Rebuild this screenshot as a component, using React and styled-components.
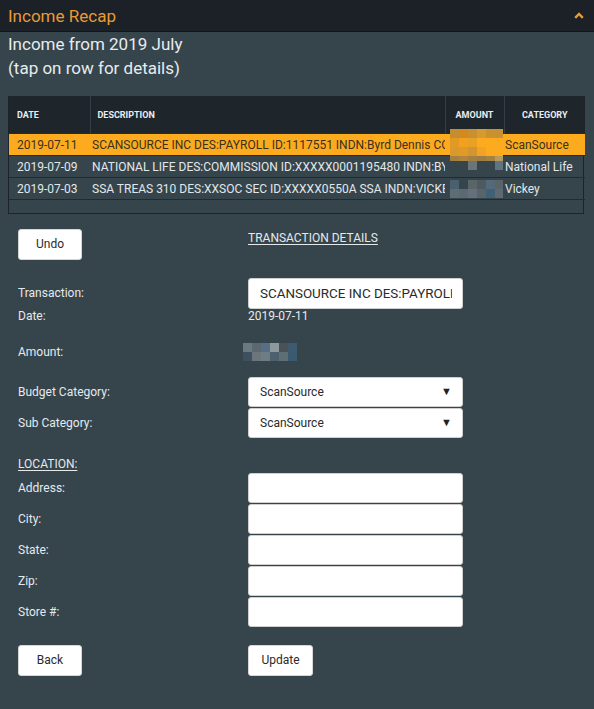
import React from 'react';
import styled, { createGlobalStyle } from 'styled-components';

const GlobalStyle = createGlobalStyle`
  html, body {
    margin: 0;
    padding: 0;
    background: #36444c;
  }
  body {
    font-family: Roboto, "Liberation Sans", Arial, sans-serif;
    color: #e4eaec;
  }
`;

const Page = styled.div`
  width: 594px;
  min-height: 709px;
  background: #36444c;
`;

const TitleBar = styled.div`
  height: 31px;
  background: #1b2127;
  border-bottom: 1px solid #11161a;
  display: flex;
  align-items: center;
  justify-content: space-between;
  padding: 0 10px 0 8px;
`;

const Title = styled.div`
  color: #e99a35;
  font-size: 17px;
`;

const Intro = styled.div`
  padding: 0 8px;
  font-size: 17px;
  line-height: 24px;
  color: #e6ecee;
`;

const TableWrap = styled.div`
  margin: 16px 10px 0 8px;
  border: 1px solid #1c2329;
  border-top: none;
`;

const Table = styled.table`
  width: 100%;
  table-layout: fixed;
  border-collapse: collapse;
  font-size: 12px;
`;

const Th = styled.th`
  background: #1e252b;
  height: 37px;
  padding: 0 ${p => (p.$first ? 8 : 7)}px;
  text-align: ${p => (p.$center ? 'center' : 'left')};
  font-size: 9px;
  font-weight: 700;
  color: #e8eef0;
  border-left: ${p => (p.$first ? 'none' : '1px solid #343e45')};
  white-space: nowrap;
  overflow: hidden;
`;

const Tr = styled.tr`
  background: ${p => (p.$active ? '#fdab1e' : 'transparent')};
  color: ${p => (p.$active ? '#3a3020' : '#e2e8ea')};
  height: ${p => p.$h || 22}px;
  border-top: 1px solid #232b31;
`;

const Td = styled.td`
  padding: 0 ${p => p.$pad ?? 2}px;
  white-space: nowrap;
  overflow: ${p => (p.$visible ? 'visible' : 'hidden')};
  position: ${p => (p.$visible ? 'relative' : 'static')};
`;

const Mosaic = styled.svg`
  position: absolute;
  left: 5px;
  top: ${p => p.$top}px;
  display: block;
`;

const Form = styled.div`
  padding: 15px 0 0 18px;
`;

const Row = styled.div`
  display: grid;
  grid-template-columns: 230px 215px;
  align-items: ${p => p.$align || 'center'};
  min-height: ${p => p.$h || 0}px;
  margin-top: ${p => p.$mt || 0}px;
`;

const Label = styled.div`
  font-size: 12px;
  color: #e4eaec;
`;

const Heading = styled.div`
  font-size: 12px;
  color: #e4eaec;
  text-decoration: underline;
  text-underline-offset: 2px;
  margin-top: ${p => p.$mt || 0}px;
`;

const Button = styled.button`
  height: 31px;
  width: ${p => p.$w || 64}px;
  background: #fff;
  border: 1px solid #d6d6d6;
  border-radius: 3px;
  font-family: Roboto, "Liberation Sans", Arial, sans-serif;
  font-size: 12px;
  color: #2b2b2b;
  padding: 0;
`;

const Field = styled.div`
  height: ${p => p.$h || 30}px;
  box-sizing: border-box;
  background: #fff;
  border: 1px solid #cfcfcf;
  border-radius: 3px;
  display: flex;
  align-items: center;
  gap: 8px;
  padding: 0 10px 0 11px;
  font-size: ${p => p.$fs || 12}px;
  color: #2a2a2a;
`;

const FieldText = styled.span`
  flex: 1;
  white-space: nowrap;
  overflow: hidden;
`;

const Arrow = styled.span`
  font-size: 11px;
  color: #222;
`;

const Value = styled.div`
  font-size: 12px;
  color: #e4eaec;
`;

const InlineMosaic = styled.svg`
  display: block;
  margin-left: -5px;
`;

const rows = [
  {
    date: '2019-07-11',
    desc: 'SCANSOURCE INC DES:PAYROLL ID:1117551 INDN:Byrd Dennis CO ID:9200503103 PPD',
    cat: 'ScanSource',
    active: true,
    mosaic: [
      ['#c68d2e', '#d28a1f', '#c8902f', '#d79a2e', '#c9922f', '#c8902e'],
      ['#e39a24', '#f1a01f', '#e8a025', '#fdab1e', '#fdab1e', '#fdab1e'],
      ['#d9992b', '#e09a27', '#d49430', '#f0a324', '#fdab1e', '#fdab1e'],
      ['#a5813f', '#b2853b', '#a4803f', '#9c7d44', '#a5823f', '#b89a5c'],
    ],
    top: -5,
  },
  {
    date: '2019-07-09',
    desc: 'NATIONAL LIFE DES:COMMISSION ID:XXXXX0001195480 INDN:BYRD DENNIS',
    cat: 'National Life',
    mosaic: [
      ['#36444c', '#36444c', '#6b7479', '#36444c', '#36444c', '#607482'],
    ],
    top: 5,
  },
  {
    date: '2019-07-03',
    desc: 'SSA TREAS 310 DES:XXSOC SEC ID:XXXXX0550A SSA INDN:VICKEY BYRD',
    cat: 'Vickey',
    mosaic: [
      ['#4a6070', '#36444c', '#5a6568', '#4d5a60', '#55697a', '#5a6468'],
      ['#5e6d72', '#5a6a74', '#66707a', '#56646c', '#3f6075', '#5e6a70'],
    ],
    top: 2,
  },
];

const amountMosaic = [
  ['#6a7880', '#5b6870', '#586e86', '#8c989c', '#4a5258', '#3e5a6e'],
  ['#3e5060', '#6a767c', '#6e7c84', '#4e6070', '#5e6e74', '#3a5a70'],
];

const MosaicSvg = ({ grid, size, top }) => (
  <Mosaic $top={top} width={grid[0].length * size - 1} height={grid.length * size}>
    {grid.map((line, r) =>
      line.map((c, i) => (
        <rect key={`${r}-${i}`} x={i * size} y={r * size} width={size} height={size} fill={c} />
      ))
    )}
  </Mosaic>
);

const locationFields = ['Address:', 'City:', 'State:', 'Zip:', 'Store #:'];

export default function App() {
  return (
    <Page>
      <GlobalStyle />
      <TitleBar>
        <Title>Income Recap</Title>
        <svg width="10" height="7" viewBox="0 0 10 7">
          <polyline points="1.2,5.8 5,2 8.8,5.8" fill="none" stroke="#e99a35" strokeWidth="2.4" />
        </svg>
      </TitleBar>
      <Intro>
        Income from 2019 July
        <br />
        (tap on row for details)
      </Intro>

      <TableWrap>
        <Table>
          <colgroup>
            <col style={{ width: 81 }} />
            <col style={{ width: 355 }} />
            <col style={{ width: 59 }} />
            <col style={{ width: 81 }} />
          </colgroup>
          <thead>
            <tr>
              <Th $first>DATE</Th>
              <Th>DESCRIPTION</Th>
              <Th $center>AMOUNT</Th>
              <Th $center>CATEGORY</Th>
            </tr>
          </thead>
          <tbody>
            {rows.map(r => (
              <Tr key={r.date} $active={r.active}>
                <Td $pad={8}>{r.date}</Td>
                <Td>{r.desc}</Td>
                <Td $visible>
                  <MosaicSvg grid={r.mosaic} size={9} top={r.top} />
                </Td>
                <Td $pad={1}>{r.cat}</Td>
              </Tr>
            ))}
            <Tr $h={13}>
              <Td />
              <Td />
              <Td />
              <Td />
            </Tr>
          </tbody>
        </Table>
      </TableWrap>

      <Form>
        <Row $align="start" $h={31}>
          <Button>Undo</Button>
          <Heading $mt={2}>TRANSACTION DETAILS</Heading>
        </Row>
        <Row $mt={18}>
          <Label>Transaction:</Label>
          <Field $fs={13.4} $h={31}>
            <FieldText>SCANSOURCE INC DES:PAYROLL ID:1117551</FieldText>
          </Field>
        </Row>
        <Row $h={15}>
          <Label>Date:</Label>
          <Value>2019-07-11</Value>
        </Row>
        <Row $mt={19}>
          <Label>Amount:</Label>
          <InlineMosaic width={54} height={18}>
            {amountMosaic.map((line, r) =>
              line.map((c, i) => (
                <rect key={`${r}-${i}`} x={i * 9} y={r * 9} width={9} height={9} fill={c} />
              ))
            )}
          </InlineMosaic>
        </Row>
        <Row $mt={16}>
          <Label>Budget Category:</Label>
          <Field>
            <FieldText>ScanSource</FieldText>
            <Arrow>▼</Arrow>
          </Field>
        </Row>
        <Row $mt={1}>
          <Label>Sub Category:</Label>
          <Field>
            <FieldText>ScanSource</FieldText>
            <Arrow>▼</Arrow>
          </Field>
        </Row>
        <Row $mt={19}>
          <Heading>LOCATION:</Heading>
        </Row>
        {locationFields.map((f, i) => (
          <Row key={f} $mt={i === 0 ? 2 : 1}>
            <Label>{f}</Label>
            <Field />
          </Row>
        ))}
        <Row $mt={18}>
          <Button>Back</Button>
          <Button $w={65}>Update</Button>
        </Row>
      </Form>
    </Page>
  );
}
